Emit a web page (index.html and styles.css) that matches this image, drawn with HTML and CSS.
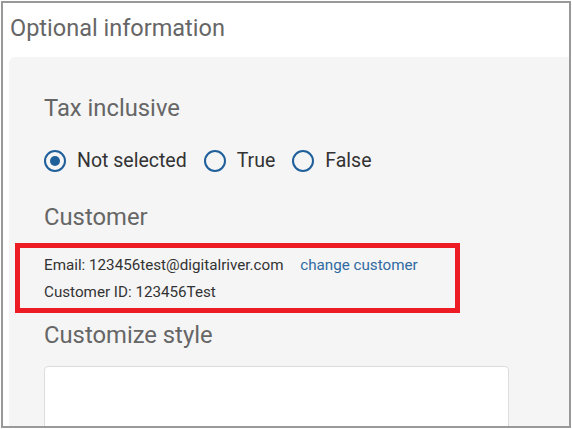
FILE: index.html
```html
<!DOCTYPE html>
<html>
<head>
<meta charset="utf-8">
<link rel="stylesheet" href="styles.css">
</head>
<body>
<div class="frame">
  <h1 class="title">Optional information</h1>
  <div class="panel">
    <h2 class="section">Tax inclusive</h2>
    <div class="radios">
      <label class="radio"><span class="dot checked"></span>Not selected</label>
      <label class="radio"><span class="dot"></span>True</label>
      <label class="radio"><span class="dot"></span>False</label>
    </div>
    <h2 class="section customer">Customer</h2>
    <div class="highlight">
      <div class="line">Email: 123456test@digitalriver.com <a class="link">change customer</a></div>
      <div class="line">Customer ID: 123456Test</div>
    </div>
    <h2 class="section style">Customize style</h2>
    <div class="textarea"></div>
  </div>
</div>
</body>
</html>
```
FILE: styles.css
```css
* { box-sizing: border-box; }
html, body { margin: 0; padding: 0; background: #fff; }
body { font-family: Roboto, "Liberation Sans", sans-serif; }
.frame {
  margin: 1px 0 0 1px;
  width: 570px;
  height: 427px;
  border: 2px solid #999;
  overflow: hidden;
}
.title {
  margin: 0;
  padding: 11px 0 0 7px;
  height: 54px;
  font-size: 23.5px;
  line-height: 28px;
  font-weight: 400;
  color: #666;
}
.panel {
  margin-left: 6px;
  width: 600px;
  height: 420px;
  background: #f5f5f5;
  border-radius: 6px;
  padding: 37px 0 0 35px;
}
.section {
  margin: 0;
  font-size: 23.8px;
  font-weight: 400;
  color: #666;
  line-height: 28px;
}
.radios {
  display: flex;
  align-items: center;
  margin-top: 27px;
  font-size: 19.5px;
  line-height: 24px;
  color: #333;
}
.radio { display: flex; align-items: center; margin-right: 17px; }
.dot {
  width: 22px; height: 22px;
  border: 2px solid #1f5f9a;
  border-radius: 50%;
  margin-right: 11px;
  display: inline-block;
  position: relative;
}
.dot.checked::after {
  content: "";
  position: absolute;
  left: 4px; top: 4px;
  width: 10px; height: 10px;
  border-radius: 50%;
  background: #1f5f9a;
}
.customer { margin-top: 30px; }
.highlight {
  margin: 12px 0 0 -29px;
  width: 445px;
  height: 70px;
  border: 5px solid #ed1c24;
  padding: 4px 0 0 24px;
  font-size: 15.2px;
  color: #333;
}
.line { line-height: 27px; }
.link { color: #2f6aa1; margin-left: 13px; }
.style { margin-top: 8px; }
.textarea {
  margin-top: 17px;
  width: 465px;
  height: 80px;
  background: #fff;
  border: 1px solid #ddd;
  border-radius: 4px;
}
```
